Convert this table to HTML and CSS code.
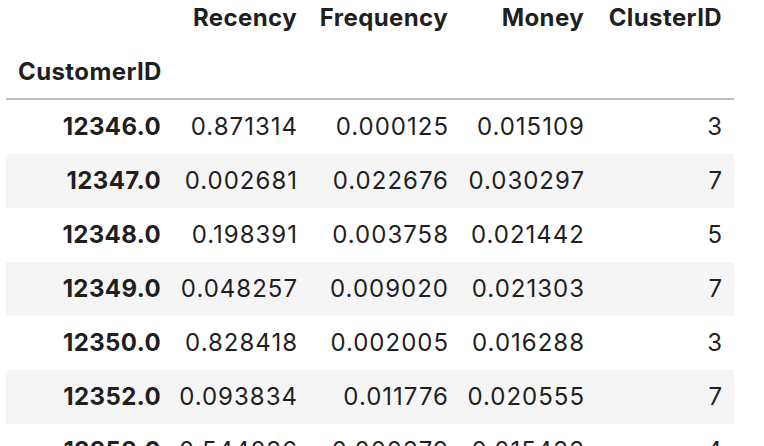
FILE: index.html
```html
<!DOCTYPE html>
<html lang="en">
<head>
    <meta charset="UTF-8">
    <meta name="viewport" content="width=device-width, initial-scale=1.0">
    <title>RFM clusters</title>
    <link rel="stylesheet" href="styles.css">
</head>
<body>
    <div class="output-area">
        <table class="dataframe">
            <colgroup>
                <col class="col-index">
                <col class="col-recency">
                <col class="col-frequency">
                <col class="col-money">
                <col class="col-cluster">
            </colgroup>
            <thead>
                <tr class="head-cols">
                    <th></th>
                    <th>Recency</th>
                    <th>Frequency</th>
                    <th>Money</th>
                    <th>ClusterID</th>
                </tr>
                <tr class="head-index">
                    <th class="index-name">CustomerID</th>
                    <th></th>
                    <th></th>
                    <th></th>
                    <th></th>
                </tr>
            </thead>
            <tbody>
                <tr><th>12346.0</th><td>0.871314</td><td>0.000125</td><td>0.015109</td><td>3</td></tr>
                <tr><th>12347.0</th><td>0.002681</td><td>0.022676</td><td>0.030297</td><td>7</td></tr>
                <tr><th>12348.0</th><td>0.198391</td><td>0.003758</td><td>0.021442</td><td>5</td></tr>
                <tr><th>12349.0</th><td>0.048257</td><td>0.009020</td><td>0.021303</td><td>7</td></tr>
                <tr><th>12350.0</th><td>0.828418</td><td>0.002005</td><td>0.016288</td><td>3</td></tr>
                <tr><th>12352.0</th><td>0.093834</td><td>0.011776</td><td>0.020555</td><td>7</td></tr>
                <tr><th>12353.0</th><td>0.544236</td><td>0.000379</td><td>0.015433</td><td>4</td></tr>
            </tbody>
        </table>
    </div>
</body>
</html>
```

FILE: styles.css
```css
* {
    margin: 0;
    padding: 0;
    box-sizing: border-box;
}
html, body {
    background: #ffffff;
    font-family: Inter, "Liberation Sans", sans-serif;
    color: #1f1f1f;
    overflow: hidden;
}
.output-area {
    padding-left: 6px;
}
.dataframe {
    width: 728px;
    table-layout: fixed;
    border-collapse: collapse;
    border-spacing: 0;
    font-size: 24px;
}
.col-index { width: 167px; }
.col-recency { width: 136px; }
.col-frequency { width: 151px; }
.col-money { width: 136px; }
.col-cluster { width: 138px; }

.dataframe th,
.dataframe td {
    text-align: right;
    vertical-align: middle;
    padding: 12px 12px 12px 2px;
    line-height: 30px;
    white-space: nowrap;
}
.dataframe th {
    font-weight: bold;
    letter-spacing: 0.4px;
}
.dataframe td {
    font-weight: normal;
    letter-spacing: 1px;
    padding-right: 11px;
}
.head-cols th {
    padding-top: 3px;
}
.head-index th {
    border-bottom: 2px solid #bdbdbd;
    padding-bottom: 11px;
}
.head-index .index-name {
    text-align: left;
    padding-left: 12px;
}
.dataframe tbody tr:nth-child(even) {
    background: #f5f5f5;
}
```
